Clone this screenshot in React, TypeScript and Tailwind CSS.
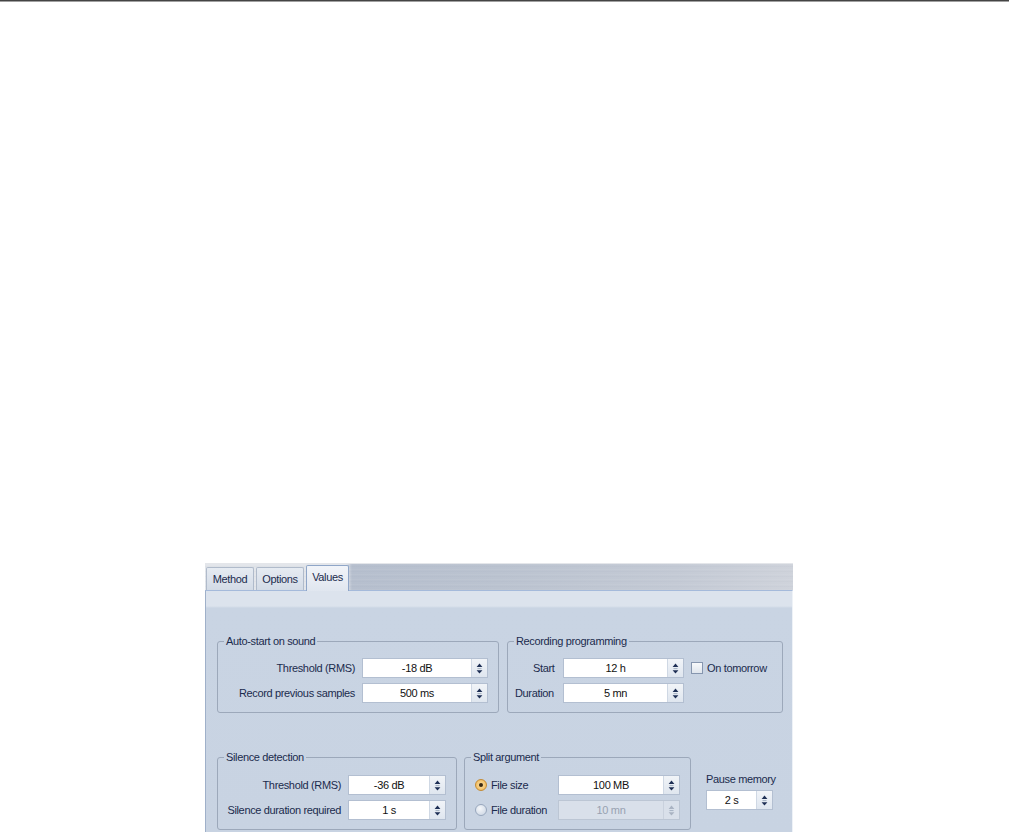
import React from 'react';

const font = "font-['Liberation_Sans',Arial,sans-serif]";

function SpinArrows({ disabled }: { disabled?: boolean }) {
  const fill = disabled ? '#a9b3c2' : '#1e2f55';
  return (
    <svg width="7" height="13" viewBox="0 0 7 13">
      <polygon points="3.5,1.6 0.6,5 6.4,5" fill={fill} />
      <line x1="1.5" y1="6.6" x2="5.5" y2="6.6" stroke="#a3b0c2" strokeWidth="1" />
      <polygon points="0.6,8.3 6.4,8.3 3.5,11.6" fill={fill} />
    </svg>
  );
}

function Spinner({ value, width, disabled }: { value: string; width: string; disabled?: boolean }) {
  return (
    <div
      className={`flex h-[20px] shrink-0 border ${width} ${
        disabled ? 'border-[#bcc6d4] bg-[#d9e0ea]' : 'border-[#b3bfd1] bg-white'
      }`}
    >
      <div
        className={`flex flex-1 items-center justify-center text-[11px] ${
          disabled ? 'text-[#98a2b1]' : 'text-[#111]'
        }`}
      >
        {value}
      </div>
      <div
        className={`flex w-[16px] items-center justify-center border-l ${
          disabled
            ? 'border-[#c9d1dd] bg-[#d9e0ea]'
            : 'border-[#cfd8e4] bg-[linear-gradient(180deg,#f1f4f8_0%,#dfe6ef_100%)]'
        }`}
      >
        <SpinArrows disabled={disabled} />
      </div>
    </div>
  );
}

function Group({
  title,
  width,
  top,
  children,
}: {
  title: string;
  width: string;
  top: string;
  children: React.ReactNode;
}) {
  return (
    <fieldset className={`shrink-0 rounded-[3px] border border-[#9ca8ba] ${width} ${top} pb-[9px]`}>
      <legend className="ml-[6px] px-[2px] text-[11px] leading-[13px] text-[#1b2b4d]">{title}</legend>
      {children}
    </fieldset>
  );
}

function Row({ label, children, pr }: { label: string; children: React.ReactNode; pr: string }) {
  return (
    <div className={`flex items-center justify-end gap-[7px] ${pr}`}>
      <span className="text-[11px] text-[#1b2b4d]">{label}</span>
      {children}
    </div>
  );
}

function Radio({ checked }: { checked?: boolean }) {
  return checked ? (
    <span className="flex h-[12px] w-[12px] items-center justify-center rounded-full border border-[#c48b33] bg-[radial-gradient(circle,#fbe2a6_0%,#efb14d_100%)]">
      <span className="h-[4px] w-[4px] rounded-full bg-[#3b2a12]" />
    </span>
  ) : (
    <span className="h-[12px] w-[12px] rounded-full border border-[#98a7bd] bg-[radial-gradient(circle_at_40%_35%,#f5f7fa_0%,#c7d2e1_100%)]" />
  );
}

export default function App() {
  return (
    <div className={`min-h-[832px] bg-white tracking-[-0.35px] ${font}`}>
      <div className="h-px bg-[#444]" />
      <div className="h-px bg-[#a0a0a0]" />

      <div className="ml-[205px] mt-[561px] w-[588px]">
        {/* tab strip, brushed metal */}
        <div className="flex h-[27px] items-end gap-[2px] border-t border-[#e4e6ea] bg-[repeating-linear-gradient(180deg,rgba(255,255,255,0.05)_0px,rgba(255,255,255,0.05)_1px,transparent_1px,transparent_2px,rgba(120,130,150,0.04)_2px,rgba(120,130,150,0.04)_3px,transparent_3px,transparent_5px),linear-gradient(90deg,#e2e5ea_0%,#e2e5ea_24%,#b6bfce_25%,#bbc3d0_50%,#c4cad5_80%,#cfd3db_100%)] pl-[1px]">
          <div className="flex h-[23px] w-[48px] items-center justify-center rounded-t-[2px] border border-b-0 border-[#b0bbcb] bg-[linear-gradient(180deg,#e6ebf2_0%,#d3dbe6_100%)] text-[11px] text-[#1b2b4d]">
            Method
          </div>
          <div className="flex h-[23px] w-[48px] items-center justify-center rounded-t-[2px] border border-b-0 border-[#b0bbcb] bg-[linear-gradient(180deg,#e6ebf2_0%,#d3dbe6_100%)] text-[11px] text-[#1b2b4d]">
            Options
          </div>
          <div className="-mb-px flex h-[26px] w-[43px] items-center justify-center rounded-t-[2px] border border-b-0 border-[#8fa6c8] bg-[linear-gradient(180deg,#f1f4f9_0%,#e0e6ef_100%)] pb-[2px] text-[11px] text-[#1b2b4d]">
            Values
          </div>
        </div>

        {/* content */}
        <div className="h-[242px] border-l border-r border-t border-l-[#9fb0c9] border-r-[#eef2f7] border-t-[#a5badb] bg-[linear-gradient(180deg,#dce3ed_0px,#dce3ed_15px,#c9d4e3_17px,#c8d3e2_100%)] pl-[11px] pt-[44px]">
          <div className="flex gap-[8px]">
            <Group title="Auto-start on sound" width="w-[282px]" top="pt-[10px]">
              <div className="flex flex-col gap-[5px]">
                <Row label="Threshold (RMS)" pr="pr-[10px]">
                  <Spinner value="-18 dB" width="w-[126px]" />
                </Row>
                <Row label="Record previous samples" pr="pr-[10px]">
                  <Spinner value="500 ms" width="w-[126px]" />
                </Row>
              </div>
            </Group>
            <Group title="Recording programming" width="w-[276px]" top="pt-[10px]">
              <div className="flex flex-col gap-[5px] pl-[7px]">
                <div className="flex items-center">
                  <span className="w-[48px] pl-[18px] text-[11px] text-[#1b2b4d]">Start</span>
                  <Spinner value="12 h" width="w-[121px]" />
                  <span className="ml-[7px] h-[12px] w-[12px] border border-[#8696af] bg-[linear-gradient(180deg,#f7f9fb_0%,#dfe5ed_100%)]" />
                  <span className="ml-[4px] text-[11px] text-[#1b2b4d]">On tomorrow</span>
                </div>
                <div className="flex items-center">
                  <span className="w-[48px] text-[11px] text-[#1b2b4d]">Duration</span>
                  <Spinner value="5 mn" width="w-[121px]" />
                </div>
              </div>
            </Group>
          </div>

          <div className="mt-[38px] flex items-start">
            <Group title="Silence detection" width="w-[240px]" top="pt-[11px]">
              <div className="flex flex-col gap-[5px]">
                <Row label="Threshold (RMS)" pr="pr-[10px]">
                  <Spinner value="-36 dB" width="w-[98px]" />
                </Row>
                <Row label="Silence duration required" pr="pr-[10px]">
                  <Spinner value="1 s" width="w-[98px]" />
                </Row>
              </div>
            </Group>
            <Group title="Split argument" width="ml-[7px] w-[227px]" top="pt-[11px]">
              <div className="flex flex-col gap-[5px] pl-[10px]">
                <div className="flex items-center">
                  <div className="flex w-[83px] items-center gap-[4px]">
                    <Radio checked />
                    <span className="text-[11px] text-[#1b2b4d]">File size</span>
                  </div>
                  <Spinner value="100 MB" width="w-[122px]" />
                </div>
                <div className="flex items-center">
                  <div className="flex w-[83px] items-center gap-[4px]">
                    <Radio />
                    <span className="text-[11px] text-[#1b2b4d]">File duration</span>
                  </div>
                  <Spinner value="10 mn" width="w-[122px]" disabled />
                </div>
              </div>
            </Group>
            <div className="ml-[15px] mt-[22px] flex flex-col">
              <span className="text-[11px] leading-[13px] text-[#1b2b4d]">Pause memory</span>
              <div className="mt-[4px]">
                <Spinner value="2 s" width="w-[67px]" />
              </div>
            </div>
          </div>
        </div>
      </div>
    </div>
  );
}
